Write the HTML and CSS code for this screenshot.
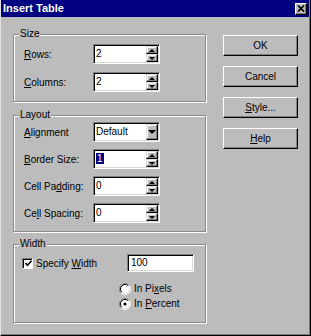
FILE: index.html
```html
<!DOCTYPE html>
<html>
<head>
<meta charset="utf-8">
<link rel="stylesheet" href="styles.css">
</head>
<body>
<div class="window">
  <div class="titlebar">
    <span class="title">Insert Table</span>
    <span class="close"><svg width="8" height="7" viewBox="0 0 8 7"><path d="M1 0.5 L7 6.5 M7 0.5 L1 6.5" stroke="#000" stroke-width="1.7" fill="none"/></svg></span>
  </div>
  <div class="body">
    <div class="groups">
      <div class="group size">
        <div class="legend">Size</div>
        <div class="rows rows-size">
          <div class="row"><span class="label"><u>R</u>ows:</span>
            <div class="field"><span class="val">2</span><span class="spinbtns"><span class="sb up"></span><span class="sb down"></span></span></div></div>
          <div class="row"><span class="label"><u>C</u>olumns:</span>
            <div class="field"><span class="val">2</span><span class="spinbtns"><span class="sb up"></span><span class="sb down"></span></span></div></div>
        </div>
      </div>
      <div class="group layout">
        <div class="legend">Layout</div>
        <div class="rows rows-layout">
          <div class="row"><span class="label"><u>A</u>lignment</span>
            <div class="field"><span class="val">Default</span><span class="ddbtn"></span></div></div>
          <div class="row"><span class="label"><u>B</u>order Size:</span>
            <div class="field"><span class="val"><span class="sel">1</span></span><span class="spinbtns"><span class="sb up"></span><span class="sb down"></span></span></div></div>
          <div class="row"><span class="label">Cell Pa<u>d</u>ding:</span>
            <div class="field"><span class="val">0</span><span class="spinbtns"><span class="sb up"></span><span class="sb down"></span></span></div></div>
          <div class="row"><span class="label">Ce<u>l</u>l Spacing:</span>
            <div class="field"><span class="val">0</span><span class="spinbtns"><span class="sb up"></span><span class="sb down"></span></span></div></div>
        </div>
      </div>
      <div class="group width">
        <div class="legend">Width</div>
        <div class="wrow">
          <div class="checkwrap">
            <span class="checkbox"><svg width="7" height="7" viewBox="0 0 7 7"><path d="M0.5 3 L2.5 5.2 L6.5 0.8" stroke="#000" stroke-width="1.6" fill="none"/></svg></span>
            <span>Specify <u>W</u>idth</span>
          </div>
          <div class="textbox">100</div>
        </div>
        <div class="radio-row first">
          <svg class="radio" width="12" height="12" viewBox="0 0 12 12"><circle cx="6" cy="6" r="5" fill="#fff"/><path d="M9.9 2.1 A5.5 5.5 0 0 0 2.1 9.9" stroke="#808080" fill="none"/><path d="M2.1 9.9 A5.5 5.5 0 0 0 9.9 2.1" stroke="#fff" fill="none"/><path d="M9.2 2.8 A4.5 4.5 0 0 0 2.8 9.2" stroke="#000" fill="none"/><path d="M2.8 9.2 A4.5 4.5 0 0 0 9.2 2.8" stroke="#dcdcdc" fill="none"/></svg>
          <span>In Pi<u>x</u>els</span>
        </div>
        <div class="radio-row">
          <svg class="radio" width="12" height="12" viewBox="0 0 12 12"><circle cx="6" cy="6" r="5" fill="#fff"/><path d="M9.9 2.1 A5.5 5.5 0 0 0 2.1 9.9" stroke="#808080" fill="none"/><path d="M2.1 9.9 A5.5 5.5 0 0 0 9.9 2.1" stroke="#fff" fill="none"/><path d="M9.2 2.8 A4.5 4.5 0 0 0 2.8 9.2" stroke="#000" fill="none"/><path d="M2.8 9.2 A4.5 4.5 0 0 0 9.2 2.8" stroke="#dcdcdc" fill="none"/><circle cx="6" cy="6" r="1.6" fill="#000"/></svg>
          <span>In <u>P</u>ercent</span>
        </div>
      </div>
    </div>
    <div class="buttons">
      <div class="btn">OK</div>
      <div class="btn">Cancel</div>
      <div class="btn"><span><u>S</u>tyle...</span></div>
      <div class="btn"><span><u>H</u>elp</span></div>
    </div>
  </div>
</div>
</body>
</html>
```
FILE: styles.css
```css
* { box-sizing: border-box; }
html, body { margin: 0; padding: 0; background: #bcbcbc; }
body { font-family: "Liberation Sans", Arial, sans-serif; font-size: 10px; color: #000; }

.window {
  width: 311px; height: 336px; background: #bcbcbc;
  border-left: 1px solid #e2e2e2; border-right: 1px solid #000; border-bottom: 1px solid #000;
  box-shadow: inset -1px -1px #777;
}
.titlebar {
  height: 17px; margin-right: 1px; background: #000080;
  display: flex; align-items: center; justify-content: space-between;
  padding: 0 2px 0 2px;
}
.title { color: #fff; font-weight: bold; font-size: 11px; line-height: 13px; }
.close {
  width: 12px; height: 12px; background: #bcbcbc;
  border: 1px solid; border-color: #fff #000 #000 #fff;
  box-shadow: inset -1px -1px #808080;
  display: flex; align-items: center; justify-content: center;
}
.close svg { display: block; }

.body { display: flex; padding: 17px 0 0 12px; }
.groups { width: 193px; display: flex; flex-direction: column; }
.group {
  border: 1px solid #8a8a8a;
  box-shadow: inset 1px 1px #fff, 1px 1px #fff;
  padding: 0 8px 0 10px;
}
.group.layout { margin-top: 13px; }
.group.width { margin-top: 12px; padding-left: 8px; padding-bottom: 11px; }
.legend {
  width: fit-content; height: 12px; line-height: 12px;
  margin: -7px 0 0 -5px; padding: 0 1px; background: #bcbcbc;
}
.group.width .legend { margin-left: -3px; }

.rows { display: flex; flex-direction: column; }
.rows-size { padding: 4px 0 9px; gap: 8px; }
.rows-layout { padding: 1px 0 8px; gap: 7px; }
.row { display: flex; align-items: center; height: 20px; }
.label { width: 69px; }

.field {
  width: 67px; height: 20px; background: #fff;
  border: 1px solid; border-color: #808080 #fff #fff #808080;
  box-shadow: inset 1px 1px #000, inset -1px -1px #d8d8d8;
  display: flex; align-items: center;
}
.val { flex: 1; padding-left: 2px; line-height: 12px; }
.sel { background: #000080; color: #fff; padding: 0 1px; }
.spinbtns { display: flex; flex-direction: column; align-self: stretch; margin: 1px 1px 1px 0; }
.sb, .ddbtn {
  width: 12px; background: #bcbcbc;
  border: 1px solid; border-color: #dcdcdc #000 #000 #dcdcdc;
  box-shadow: inset -1px -1px #808080, inset 1px 1px #fff;
  display: flex; align-items: center; justify-content: center;
}
.sb { flex: 1; }
.ddbtn { align-self: stretch; margin: 1px 1px 1px 0; }
.up::after {
  content: ""; border-left: 3px solid transparent; border-right: 3px solid transparent;
  border-bottom: 3px solid #000;
}
.down::after {
  content: ""; border-left: 3px solid transparent; border-right: 3px solid transparent;
  border-top: 3px solid #000;
}
.ddbtn::after {
  content: ""; border-left: 4px solid transparent; border-right: 4px solid transparent;
  border-top: 4px solid #000;
}

.wrow { display: flex; align-items: center; height: 18px; margin-top: 4px; }
.checkwrap { width: 105px; display: flex; align-items: center; gap: 3px; }
.checkbox {
  width: 11px; height: 11px; background: #fff;
  border: 1px solid; border-color: #808080 #fff #fff #808080;
  box-shadow: inset 1px 1px #000;
  display: flex; align-items: center; justify-content: center;
}
.checkbox svg { display: block; margin: 1px 0 0 1px; }
.textbox {
  width: 67px; height: 18px; background: #fff;
  border: 1px solid; border-color: #808080 #fff #fff #808080;
  box-shadow: inset 1px 1px #000, inset -1px -1px #d8d8d8;
  padding-left: 3px; line-height: 16px;
}
.radio-row { display: flex; align-items: center; gap: 3px; height: 15px; margin-left: 97px; }
.radio-row.first { margin-top: 9px; }
.radio { display: block; }

.buttons { margin: 1px 0 0 17px; display: flex; flex-direction: column; gap: 10px; }
.btn {
  width: 75px; height: 21px;
  border: 1px solid; border-color: #fff #000 #000 #fff;
  box-shadow: inset -1px -1px #808080;
  display: flex; align-items: center; justify-content: center;
}
```
